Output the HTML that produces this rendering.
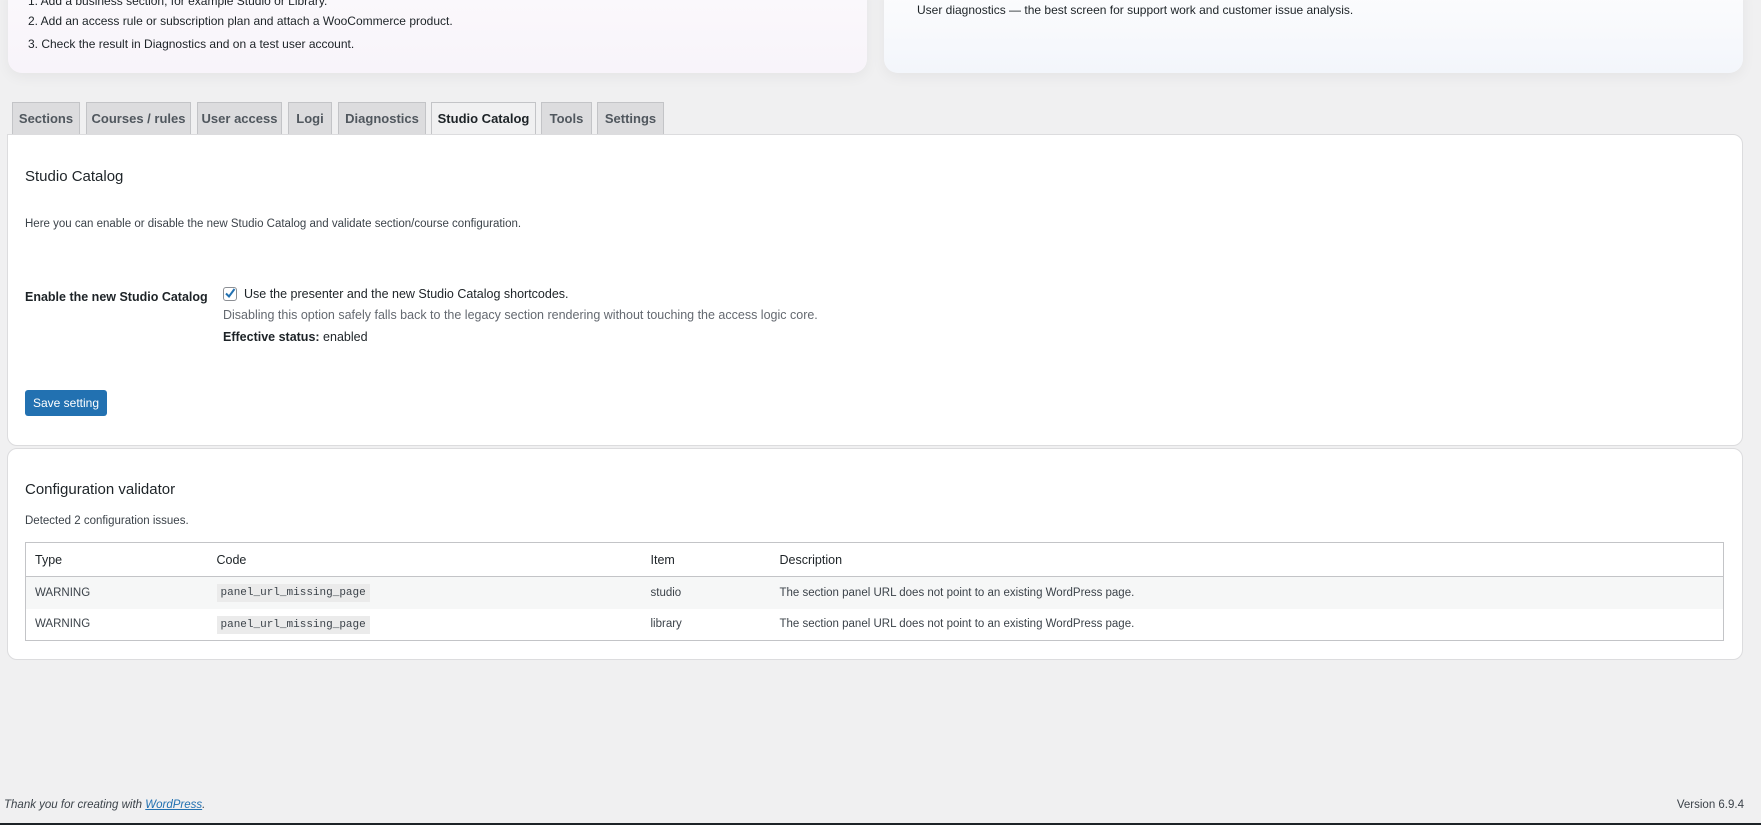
<!DOCTYPE html>
<html><head><meta charset="utf-8"><style>
*{box-sizing:border-box;margin:0;padding:0}
body{width:1761px;height:825px;background:#f0f0f1;font-family:"Liberation Sans",sans-serif;color:#1d2327;position:relative;overflow:hidden;font-size:12px}
.abs{position:absolute;white-space:nowrap}
.card{position:absolute;border-radius:14px;box-shadow:0 4px 14px rgba(0,0,0,.05)}
.tab{position:absolute;top:102px;height:32px;background:#dcdcde;border:1px solid #c3c4c7;border-bottom:none;font-size:13px;font-weight:bold;color:#50575e;line-height:31px;text-align:center}
.tab.on{background:#f0f0f1;color:#1d2327;height:33px}
.panel{position:absolute;left:7px;width:1736px;background:#fff;border:1px solid #dcdcde;border-radius:10px}
table{position:absolute;left:25px;top:542px;width:1699px;border-collapse:collapse;border:1px solid #c3c4c7;font-size:11.5px;color:#3c434a}
td,th{height:32px;text-align:left;font-weight:normal;padding:0 0 0 9px}
th{font-size:12.5px;color:#1d2327;height:34px;border-bottom:1px solid #c3c4c7}
tr.alt td{background:#f6f7f7}
code{font-family:"Liberation Mono",monospace;font-size:11px;background:#ebebeb;padding:3px 4px;color:#3c434a}
</style></head><body>
<div class="card" style="left:8px;top:-20px;width:859px;height:93px;background:linear-gradient(#fbf9fc,#f8f4fa)"></div>
<div class="abs" style="left:28px;top:-6px;font-size:12px">1. Add a business section, for example Studio or Library.</div>
<div class="abs" style="left:28px;top:14px;font-size:12px">2. Add an access rule or subscription plan and attach a WooCommerce product.</div>
<div class="abs" style="left:28px;top:37px;font-size:12px">3. Check the result in Diagnostics and on a test user account.</div>
<div class="card" style="left:884px;top:-20px;width:859px;height:93px;background:linear-gradient(#fdfdfe,#f3f6fb)"></div>
<div class="abs" style="left:917px;top:3px;font-size:12px">User diagnostics — the best screen for support work and customer issue analysis.</div>

<div class="tab" style="left:12px;width:68px">Sections</div>
<div class="tab" style="left:86px;width:105px">Courses / rules</div>
<div class="tab" style="left:197px;width:85px">User access</div>
<div class="tab" style="left:288px;width:44px">Logi</div>
<div class="tab" style="left:338px;width:88px">Diagnostics</div>
<div class="tab on" style="left:431px;width:105px">Studio Catalog</div>
<div class="tab" style="left:541px;width:51px">Tools</div>
<div class="tab" style="left:597px;width:67px">Settings</div>

<div class="panel" style="top:134px;height:312px;border-top-left-radius:0"></div>
<div class="abs" style="left:25px;top:168px;font-size:15px">Studio Catalog</div>
<div class="abs" style="left:25px;top:218px;font-size:11.5px;color:#3c434a">Here you can enable or disable the new Studio Catalog and validate section/course configuration.</div>
<div class="abs" style="left:25px;top:290px;font-size:12.5px;font-weight:bold">Enable the new Studio Catalog</div>
<div class="abs" style="left:223px;top:287px;width:14px;height:14px;border:1px solid #8c8f94;border-radius:3px;background:#fff"><svg width="14" height="14" viewBox="0 0 14 14" style="position:absolute;left:-1px;top:-2px"><path d="M3 7.5 L6 10.5 L11.5 3" stroke="#2271b1" stroke-width="2" fill="none"/></svg></div>
<div class="abs" style="left:244px;top:287px;font-size:12.5px">Use the presenter and the new Studio Catalog shortcodes.</div>
<div class="abs" style="left:223px;top:308px;font-size:12.5px;color:#646970">Disabling this option safely falls back to the legacy section rendering without touching the access logic core.</div>
<div class="abs" style="left:223px;top:330px;font-size:12.5px"><b>Effective status:</b> enabled</div>
<div class="abs" style="left:25px;top:390px;width:82px;height:26px;background:#2271b1;border-radius:3px;color:#fff;font-size:12px;line-height:26px;text-align:center">Save setting</div>

<div class="panel" style="top:448px;height:212px"></div>
<div class="abs" style="left:25px;top:481px;font-size:15px">Configuration validator</div>
<div class="abs" style="left:25px;top:515px;font-size:11.5px;color:#3c434a">Detected 2 configuration issues.</div>
<table>
<tr><th style="width:182px">Type</th><th style="width:434px">Code</th><th style="width:129px">Item</th><th>Description</th></tr>
<tr class="alt"><td>WARNING</td><td><code>panel_url_missing_page</code></td><td>studio</td><td>The section panel URL does not point to an existing WordPress page.</td></tr>
<tr><td>WARNING</td><td><code>panel_url_missing_page</code></td><td>library</td><td>The section panel URL does not point to an existing WordPress page.</td></tr>
</table>

<div class="abs" style="left:4px;top:799px;font-size:11.5px;font-style:italic;color:#3c434a">Thank you for creating with <span style="color:#2271b1;text-decoration:underline">WordPress</span>.</div>
<div class="abs" style="right:17px;top:799px;font-size:11.5px;color:#3c434a">Version 6.9.4</div>
<div class="abs" style="left:0;top:823px;width:1761px;height:2px;background:#1d2327"></div>
</body></html>
